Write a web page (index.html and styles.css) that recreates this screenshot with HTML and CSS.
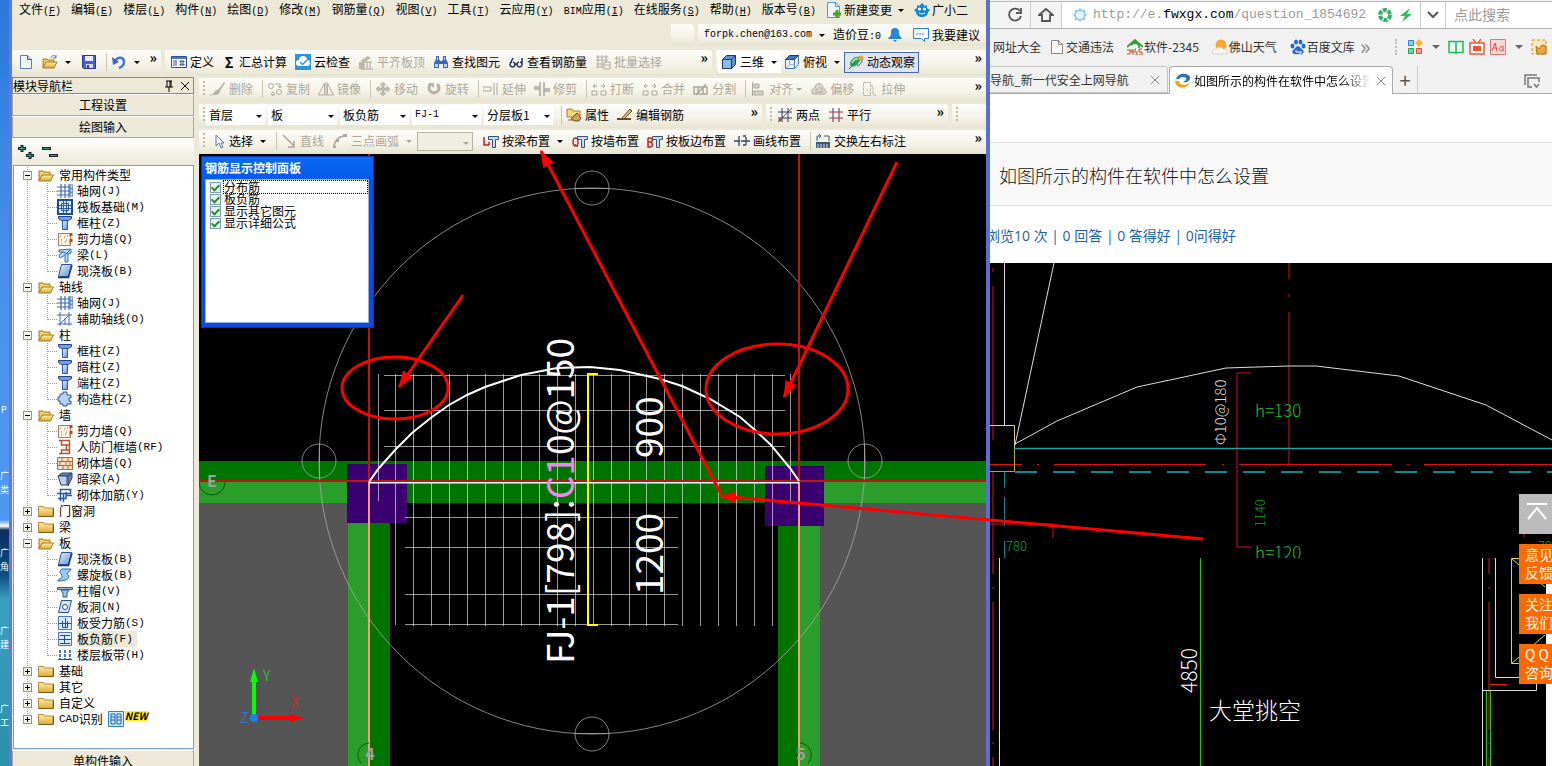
FILE: index.html
```html
<!DOCTYPE html>
<html lang="zh-CN">
<head>
    <meta charset="UTF-8">
    <meta name="viewport" content="width=device-width, initial-scale=1.0">
    <title>如图所示的构件在软件中怎么设置</title>
    <link rel="stylesheet" href="styles.css">
</head>
<body>
    <!-- icon set -->
    <svg class="sprite" aria-hidden="true">
        <defs>
            <linearGradient id="blue" x1="0" y1="0" x2="1" y2="1"><stop offset="0" stop-color="#e8f2ff"/><stop offset="1" stop-color="#5f94dc"/></linearGradient>
            <linearGradient id="gold" x1="0" y1="0" x2="0" y2="1"><stop offset="0" stop-color="#fff0a8"/><stop offset="1" stop-color="#dfa43a"/></linearGradient>
            <symbol id="new" viewBox="0 0 16 16"><path d="M2.500 1.500h7l4 4v9h-11z" fill="#f2f8ff" stroke="#5f7fae"/><path d="M9.500 1.500v4h4" fill="#bcd4f0" stroke="#34548c"/></symbol>
            <symbol id="open" viewBox="0 0 16 16"><path d="M1 14V4h4l1 1h6v3" fill="#f2cf62" stroke="#a67b1e"/><path d="M1 14l3-6h11.500l-3 6z" fill="url(#gold)" stroke="#a67b1e"/></symbol>
            <symbol id="openup" viewBox="0 0 16 16"><path d="M1 14V5h4l1 1h6v2" fill="#f2cf62" stroke="#a67b1e"/><path d="M1 14l3-6h11l-3 6z" fill="url(#gold)" stroke="#a67b1e"/><path d="M9 4c1-3 3-3 5-1m0-2v3h-3" fill="none" stroke="#4c7cc0"/></symbol>
            <symbol id="folder" viewBox="0 0 16 16"><path d="M.500 13.500v-10h5l1 1.500h8.500v8.500z" fill="url(#gold)" stroke="#b98c2c"/><path d="M1 13.500h14.500V5" fill="none" stroke="#7c5a14"/></symbol>
            <symbol id="save" viewBox="0 0 16 16"><path d="M1.500 1.500h13v13h-12l-1-1z" fill="#4a5fd0" stroke="#2b3590"/><path d="M4 2h8v5H4z" fill="#e8eefc"/><path d="M5 10h7v4H5z" fill="#d0d8f0"/><path d="M6 11h2v3H6z" fill="#2b3590"/></symbol>
            <symbol id="undo" viewBox="0 0 16 16"><path d="M4 7c3-5 9-4 9 1 0 3-2 5-5 6" fill="none" stroke="#4a78d8" stroke-width="2.500"/><path d="M1 3l1 8 6-3z" fill="#3a68c8"/></symbol>
            <symbol id="define" viewBox="0 0 16 16"><path d="M.500 2.500h15v11h-15z" fill="#fff" stroke="#2c4f98"/><path d="M1 3h14v2H1z" fill="#4d79c8"/><path d="M2 7h4m-4 2h4m-4 2h4M9 7h4v1H9zm0 3h4v1H9z" stroke="#2c4f98" fill="none"/></symbol>
            <symbol id="cloud" viewBox="0 0 16 16"><path d="M0 0h16v16H0z" fill="#2f93d8"/><path d="M4 12a3 3 0 0 1 0-6 4 4 0 0 1 8 0 3 3 0 0 1 0 6z" fill="#fff"/><path d="M5 8l2.500 2.500L12 6" fill="none" stroke="#2f93d8" stroke-width="1.500"/></symbol>
            <symbol id="level" viewBox="0 0 16 16"><path d="M2 7l8-5 3 2-6 4zM1 8h5v7H1z" fill="#bdb9aa"/><path d="M6 14V9m3 5V8m3 6V8M3 15h12M4 8h10" stroke="#a5a193" fill="none"/></symbol>
            <symbol id="find" viewBox="0 0 16 16"><path d="M3 2h3v3l1 2h2l1-2V2h3v3l2 4v5h-5v-4H6v4H1V9l2-4z" fill="#3c69b4"/><path d="M2 10h3v3H2zm9 0h3v3h-3zM4 3h1v3H4zm7 0h1v3h-1z" fill="#b6d1f5"/></symbol>
            <symbol id="glasses" viewBox="0 0 16 16"><path d="M4 8a2.500 2.500 0 1 0 1 0M11 8a2.500 2.500 0 1 0 1 0M6 10h3M2 10L5 4M14 10V4" fill="none" stroke="#203058" stroke-width="1.500"/></symbol>
            <symbol id="batch" viewBox="0 0 16 16"><path d="M1 3h12M1 6h12M1 10h8M3 1v13M7 1v13M11 1v8M1 13h7M9 8h6v7H9zM9 11h6" fill="none" stroke="#b0ac9f"/></symbol>
            <symbol id="cube" viewBox="0 0 16 16"><path d="M1.500 5.500l4-4h9v9l-4 4h-9z" fill="#5d93cf" stroke="#1f3c68"/><path d="M1.500 5.500h9v9h-9z" fill="#8dbbe8" stroke="#1f3c68"/><path d="M10.500 5.500l4-4" stroke="#1f3c68"/></symbol>
            <symbol id="cubetop" viewBox="0 0 16 16"><path d="M1.500 5.500h9v9h-9zM10.500 5.500l4-4v9l-4 4" fill="#e8f2fc" stroke="#4874a8"/><path d="M1.500 5.500l4-4h9l-4 4z" fill="#3d74bd" stroke="#1f3c68"/><path d="M5.500 5.500v5h5M5.500 10.500l-4 4" fill="none" stroke="#9ab8dc"/></symbol>
            <symbol id="orbit" viewBox="0 0 16 16"><path d="M2 10c0-4 5-8 9-7 3 2-1 8-4 9-2 1-5 1-5-2z" fill="#2d9c50"/><path d="M4 9c1-3 4-5 6-4" stroke="#9ce4a8" stroke-width="2" fill="none"/><circle cx="13" cy="4" r="2.500" fill="#f0a020"/><path d="M1 15l6-6" stroke="#58503a"/><path d="M9 12c3-1 5-4 5-6" stroke="#2a60a8" fill="none"/></symbol>
            <symbol id="brush" viewBox="0 0 16 16"><path d="M14 1L8 9l2 1 5-8zM8 9c-3-1-3 3-6 4 3 2 8 1 8-3z" fill="#b5b1a4"/><path d="M0 14h2m1 0h1" stroke="#b5b1a4"/></symbol>
            <symbol id="copy" viewBox="0 0 16 16"><g fill="none" stroke="#b0ac9f"><circle cx="4" cy="5" r="2.500"/><circle cx="12" cy="11" r="2.500"/><circle cx="6" cy="13" r="1.500"/><path d="M8 3h5v4m-2-2l2 2 2-2"/></g></symbol>
            <symbol id="mirror" viewBox="0 0 16 16"><path d="M6.500 2v12h-6zM9.500 2v12h6zM8 1v14" fill="none" stroke="#b0ac9f"/></symbol>
            <symbol id="move" viewBox="0 0 16 16"><path d="M8 1l3 3H9v3h3V5l3 3-3 3V9H9v3h2l-3 3-3-3h2V9H4v2L1 8l3-3v2h3V4H5z" fill="#c0bcae" stroke="#a8a497" stroke-width=".5"/></symbol>
            <symbol id="rotate" viewBox="0 0 16 16"><path d="M5 3a5 5 0 1 0 6 0" fill="none" stroke="#b5b1a4" stroke-width="3"/><path d="M2 2h6v5z" fill="#b5b1a4"/></symbol>
            <symbol id="extend" viewBox="0 0 16 16"><path d="M0 6h8v4H0zM11 2v12M14 2v12" fill="none" stroke="#aba79a"/></symbol>
            <symbol id="trim" viewBox="0 0 16 16"><path d="M6 1v14M10 1v14M0 8h6m4 0h6M0 6h5m6 4h5" fill="none" stroke="#aba79a" stroke-width="1.500"/></symbol>
            <symbol id="break" viewBox="0 0 16 16"><path d="M1 10h5v4H1zM10 10h5v4h-5zM2 5h4M10 5h4M4 3L2 5l2 2m8-4l2 2-2 2" fill="none" stroke="#aba79a"/></symbol>
            <symbol id="split" viewBox="0 0 16 16"><path d="M1 6h13v7H1zM3 14L13 3m-8 3v7m5-7v7" fill="none" stroke="#aba79a" stroke-width="1.500"/></symbol>
            <symbol id="align" viewBox="0 0 16 16"><path d="M2.500 1v14M4 3h5v4H4zM4 10h9v4H4z" fill="#d5d1c4" stroke="#aba79a"/></symbol>
            <symbol id="offset" viewBox="0 0 16 16"><path d="M2 13c-3-3 0-6 2-6 0-6 8-6 8 0 3 1 4 4 2 6zM5 11c-1-2 1-3 2-3 0-2 3-2 3 0 1 0 2 1 1 3z" fill="#dcd8cc" stroke="#aba79a"/></symbol>
            <symbol id="stretch" viewBox="0 0 16 16"><path d="M1.500 1.500h7v13h-7zM8 5h3v9h4M4 8l3 3" fill="none" stroke="#b5b1a4" stroke-dasharray="3 1"/></symbol>
            <symbol id="props" viewBox="0 0 16 16"><path d="M1 2h5l1 2h7v6H1z" fill="#f3d774" stroke="#a98230"/><path d="M5 12l6-6 4 5-2 3H9z" fill="#cfa268" stroke="#6c4a20"/><path d="M2 13h5" stroke="#8c6c30"/></symbol>
            <symbol id="editbar" viewBox="0 0 16 16"><path d="M0 12h14" stroke="#704030" stroke-width="2"/><path d="M5 11l8-9 2 2-8 8z" fill="#d8c070" stroke="#604820"/></symbol>
            <symbol id="twopt" viewBox="0 0 16 16"><path d="M5 1v14M11 1v14M1 5h14M1 11h14" stroke="#303860"/><path d="M1 15L15 1" stroke="#b03838"/><circle cx="3" cy="13" r="1.500" fill="#b03838"/></symbol>
            <symbol id="parallel" viewBox="0 0 16 16"><path d="M5 1v14M11 1v14" stroke="#303870"/><path d="M1 5h14M1 11h14" stroke="#c02848"/></symbol>
            <symbol id="cursor" viewBox="0 0 16 16"><path d="M6 2v11l3-3 2 5 2-1-2-4h3z" fill="#f4f8ff" stroke="#5878a8"/></symbol>
            <symbol id="line" viewBox="0 0 16 16"><path d="M2 2l11 11m0-5v6H7" fill="none" stroke="#aba79a" stroke-width="1.500"/></symbol>
            <symbol id="arc" viewBox="0 0 16 16"><path d="M2 14C2 8 7 3 13 3" fill="none" stroke="#aba79a" stroke-width="1.500"/><path d="M1 13h3v2H1zM4 6h3v3H4zM11 1h4v3h-4z" fill="#aba79a"/></symbol>
            <symbol id="tee" viewBox="0 0 16 16"><path d="M5.500 3.500h10v3h-3v8h-3v-8h-4z" fill="#c6dcf4" stroke="#33547c"/></symbol>
            <symbol id="beamset" viewBox="0 0 16 16"><use href="#tee"/><path d="M1 4v8h5M6 9v3" fill="none" stroke="#c02020" stroke-width="1.500"/></symbol>
            <symbol id="wallset" viewBox="0 0 16 16"><use href="#tee"/><ellipse cx="3.500" cy="9" rx="2.500" ry="4" fill="none" stroke="#c02020" stroke-width="1.500"/><path d="M3 11l3 3" stroke="#c02020"/></symbol>
            <symbol id="edgeset" viewBox="0 0 16 16"><use href="#tee"/><path d="M1 5v9h2.500c3 0 2-5-.5-5H1m0-4h2c3 0 3 4 0 4" fill="none" stroke="#c02020" stroke-width="1.500"/></symbol>
            <symbol id="lineset" viewBox="0 0 16 16"><path d="M0 8h4m3 0h9M5 3v10M12 4v8M3 8h3M9 3h3m-3 9h3" fill="none" stroke="#304868" stroke-width="1.300"/></symbol>
            <symbol id="swap" viewBox="0 0 16 16"><path d="M2 8V3h4m3 0h5v5M4 1l2 2-2 2" fill="none" stroke="#405878"/><path d="M1 9h14v6H1z" fill="#405878"/><path d="M3 11v4m3-4v4m3-4v4m3-4v4" stroke="#d5e0ee"/></symbol>
            <symbol id="docadd" viewBox="0 0 16 16"><path d="M1.500.500h8l4 4v11h-12z" fill="#eaf5fd" stroke="#4a9cd0"/><path d="M9.500.500v4h4" fill="none" stroke="#4a9cd0"/><path d="M11 8v8M7 12h8" stroke="#48a020" stroke-width="3"/></symbol>
            <symbol id="mascot" viewBox="0 0 16 16"><path d="M3 3l2 1 3-3 3 3 2-1v3l3 2-2 2c0 3-3 5-6 5s-6-2-6-5L0 8l3-2z" fill="#1787d0"/><circle cx="5.500" cy="7" r="1.500" fill="#fff"/><circle cx="10.500" cy="7" r="1.500" fill="#fff"/><path d="M5 11q3 2 6 0" fill="none" stroke="#fff"/></symbol>
            <symbol id="bell" viewBox="0 0 16 16"><path d="M8 1c4 0 4 3 4 6 0 2 3 4 3 5H1c0-1 3-3 3-5 0-3 0-6 4-6zM6 13h4l-2 2z" fill="#2386d8"/></symbol>
            <symbol id="chat" viewBox="0 0 16 16"><path d="M.500 1.500h15v10h-4v3l-3-3h-8z" fill="#f4faff" stroke="#3080c8"/><path d="M3 7h2m1 0h2m1 0h2" stroke="#3080c8"/></symbol>
            <symbol id="grid" viewBox="0 0 16 16"><path d="M4 1v14M8 1v14M12 1v14M0 4h14M0 8h14M0 12h14" stroke="#3d6cb8" fill="none" stroke-width="1.200"/><path d="M13 2h3v3h-3zm0 4h3v3h-3zm0 4h3v3h-3z" fill="#fff" stroke="#3d6cb8"/></symbol>
            <symbol id="raft" viewBox="0 0 16 16"><path d="M1 1h14v14H1z" fill="#dceaff" stroke="#1c4c9c" stroke-width="2"/><path d="M4.500 4.500h7v7h-7zM6.500 2v12M9.500 2v12M2 6.500h12M2 9.500h12" fill="none" stroke="#2c5cac"/></symbol>
            <symbol id="column" viewBox="0 0 16 16"><path d="M1.500 1.500h13v2l-3 2h-7l-3-2z" fill="#6ea0e8" stroke="#203f8c"/><path d="M5.500 5.500h5v9h-5z" fill="url(#blue)" stroke="#3157a4"/></symbol>
            <symbol id="shear" viewBox="0 0 16 16"><path d="M1.500 2.500h12v12h-12z" fill="#fff3e4" stroke="#b07850"/><path d="M14 2v3m0 3v3" stroke="#b04c20" stroke-width="3"/><path d="M3 5h1m3 1h1m-4 3h1m4 0h1m-6 3h1m3-1h1m3 1h1M10 5h1" stroke="#806050"/></symbol>
            <symbol id="beam" viewBox="0 0 16 16"><path d="M2 3l12-1v4l-3 1v8H8V8L3 11l-1-3 4-3H2z" fill="#b5dcf6" stroke="#3174ac"/><path d="M6 5l5 2m-3 1l5-5" stroke="#3174ac"/></symbol>
            <symbol id="slab" viewBox="0 0 16 16"><path d="M4.500 1.500h10l-3 12h-10z" fill="url(#blue)" stroke="#24509c"/><path d="M1 14.500h10.500L15 2" fill="none" stroke="#173878" stroke-width="1.500"/></symbol>
            <symbol id="aux" viewBox="0 0 16 16"><path d="M3 1v14M12 1v14M0 4h15M0 13h15M3 13l9-9M8 7v7" stroke="#3d6cb8" fill="none"/></symbol>
            <symbol id="gear" viewBox="0 0 16 16"><path d="M6 1h4v3h4v3h-2v3h2v3h-4v2H6v-2H3v-3H1V6h2V3h3z" fill="#b5d2f4" stroke="#2c5494"/></symbol>
            <symbol id="doorwall" viewBox="0 0 16 16"><path d="M2 1.500h11M2 14.500h11M4.500 2v4h5v5h-5v3M12.500 2v12M9 6h3m-3 5h3" fill="#fff3e4" stroke="#b05428" stroke-width="1.500"/></symbol>
            <symbol id="brick" viewBox="0 0 16 16"><path d="M.500 2.500h15v12H.500zM0 6.500h16M0 10.500h16M5 2v4m6-4v4M3 7v4m6-4v4m4-4v4M6 11v3m5-3v3" fill="#fbe0c8" stroke="#b86838"/></symbol>
            <symbol id="hidbeam" viewBox="0 0 16 16"><path d="M1 5l4-3h10l-4 3zM11 5l4-3v5l-4 8z" fill="#6885b4" stroke="#28406c"/><path d="M1 5h9v9H4z" fill="#bed0ec" stroke="#28406c"/></symbol>
            <symbol id="tie" viewBox="0 0 16 16"><path d="M3.500 14V2.500h11M1 11.500h8V5M9 8.500h6M6.500 15V6.500h7V2M0 6.500h6" fill="none" stroke="#205cac" stroke-width="1.500"/></symbol>
            <symbol id="spiral" viewBox="0 0 16 16"><path d="M5 2h9c0 3-6 3-3 6 3 3-2 6-10 6 0-3 5-2 4-5C4 6 1 5 5 2z" fill="#95cdf4" stroke="#25649c"/></symbol>
            <symbol id="cap" viewBox="0 0 16 16"><path d="M.500 4.500h15v2H.500z" fill="#aab4c0" stroke="#485868"/><path d="M4 7h8l-2 3v4H6v-4z" fill="#9cc2f0" stroke="#285898"/></symbol>
            <symbol id="hole" viewBox="0 0 16 16"><path d="M4.500 1.500h10l-3 12h-10z" fill="#cfe2fb" stroke="#24509c"/><circle cx="8" cy="8" r="2.500" fill="#fff" stroke="#24509c"/></symbol>
            <symbol id="mainbar" viewBox="0 0 16 16"><path d="M1.500 1.500h13v13h-13z" fill="#d9e9ff" stroke="#4c78b8"/><path d="M2 8.500h12M8.500 3v10M5.500 6v6.500h5V6" fill="none" stroke="#204c94"/></symbol>
            <symbol id="negbar" viewBox="0 0 16 16"><path d="M1.500 1.500h13v13h-13z" fill="#d9e9ff" stroke="#4c78b8"/><path d="M2 8.500h12M3 4.500h10M3 12.500h10M7.500 4v8" fill="none" stroke="#204c94"/></symbol>
            <symbol id="strip" viewBox="0 0 16 16"><path d="M1 12.500h14" stroke="#204c94"/><path d="M3 3v9m5-9v9m5-9v9" stroke="#4c78b8" stroke-width="2" stroke-dasharray="3 1"/></symbol>
            <symbol id="cadid" viewBox="0 0 16 16"><path d="M.500.500h15v15H.500z" fill="#cfe9fb" stroke="#2c84c4"/><path d="M3 3h4v10H3zm6 0h4v10H9zM3 6h4m2 0h4M3 9h4m2 0h4" fill="none" stroke="#1c64a4"/></symbol>
            <symbol id="site" viewBox="0 0 16 16"><path d="M8 1l2 2h3v3l2 2-2 2v3h-3l-2 2-2-2H3v-3L1 8l2-2V3h3z" fill="#8cc8f4"/><circle cx="8" cy="8" r="4" fill="#e4f4ff"/></symbol>
            <symbol id="speed" viewBox="0 0 16 16"><circle cx="8" cy="8" r="5" fill="none" stroke="#30b068" stroke-width="4" stroke-dasharray="4 1.200"/></symbol>
            <symbol id="bolt" viewBox="0 0 16 16"><path d="M12 1L2 9h5l-3 6L14 7H9z" fill="#28c060"/></symbol>
            <symbol id="page" viewBox="0 0 16 16"><path d="M2.500 1.500h7l4 4v9h-11zM9.500 1.500v4h4" fill="#fff" stroke="#888"/></symbol>
            <symbol id="house" viewBox="0 0 16 16"><path d="M0 8l8-7 8 7M4 6l4-3 4 3v3" fill="none" stroke="#38a038" stroke-width="1.800"/><path d="M0 11h3v4H0m4-5v3h3m-1-3v6m3-6H8v3h2v3H8m7-6h-3v3h3v3h-3" fill="none" stroke="#d04818"/></symbol>
            <symbol id="weather" viewBox="0 0 16 16"><circle cx="9" cy="6" r="5.500" fill="#f8a830"/><path d="M1 15c-2-3 1-5 3-5 2-3 6-2 7 0 4-1 5 3 4 5z" fill="#f4f4f4" stroke="#bbb" stroke-width=".5"/></symbol>
            <symbol id="paw" viewBox="0 0 16 16"><g fill="#2668d8"><ellipse cx="2.500" cy="7" rx="2" ry="2.500"/><ellipse cx="6" cy="3" rx="2" ry="2.500"/><ellipse cx="10.500" cy="3" rx="2" ry="2.500"/><ellipse cx="13.500" cy="7" rx="2" ry="2.500"/><path d="M8 7c2 0 3 3 5 4 2 3-1 5-5 4-4 1-7-1-5-4 2-1 3-4 5-4z"/></g><path d="M5 12h2v2m2-2v2h2v-2" fill="none" stroke="#fff"/></symbol>
            <symbol id="apps" viewBox="0 0 16 16"><path d="M1.500 1.500h5v5h-5z" fill="#8cc8f8" stroke="#2484d8"/><path d="M1.500 9.500h5v5h-5z" fill="#70d890" stroke="#20a850"/><path d="M9.500 9.500h5v5h-5z" fill="#f8a090" stroke="#e05038"/><path d="M12 0l4 4-4 4-4-4z" fill="#f8b828"/></symbol>
            <symbol id="book" viewBox="0 0 16 16"><path d="M1 2.500h6l1 1 1-1h6v11H9l-1 1-1-1H1zM8 3v11" fill="#e8fbee" stroke="#20b858" stroke-width="1.500"/></symbol>
            <symbol id="tv" viewBox="0 0 16 16"><path d="M1 4h14v11H1zM4 0l3 4m5-4L9 4" fill="#fff" stroke="#e85838" stroke-width="1.500"/><path d="M4 7h8v5H4z" fill="#e85838"/></symbol>
            <symbol id="aa" viewBox="0 0 16 16"><path d="M.500.500h15v15H.500z" fill="#fcd8d4" stroke="#e07870"/><path d="M2 12l3-8 2 8M3 9h4m6-2v5m0-4c-4-2-5 4-2 4 1 0 2-1 2-2" fill="none" stroke="#d85048"/></symbol>
            <symbol id="snap" viewBox="0 0 16 16"><path d="M1 1h14v14H1z" fill="#fce8c0" stroke="#d89020" stroke-dasharray="3 2"/><path d="M5 7l3 3 3-4 4 1v8H6z" fill="#e8a840" stroke="#b87010"/></symbol>
            <symbol id="glodon" viewBox="0 0 16 16"><path d="M1 6c2-6 11-7 14-2 1 3-3 6-7 5 2-1 4-2 3-4-2-2-6-1-7 1z" fill="#2374b8"/><path d="M0 8h4c0 4 6 5 11 2-3 6-14 7-15-2z" fill="#f0a020"/></symbol>
            <symbol id="reload" viewBox="0 0 16 16"><path d="M13 4a6 6 0 1 0 1 5" fill="none" stroke="#555" stroke-width="1.800"/><path d="M14 1v5H9" fill="none" stroke="#555" stroke-width="1.800"/></symbol>
            <symbol id="home" viewBox="0 0 16 16"><path d="M1 8l7-6 7 6h-3v6H4V8z" fill="none" stroke="#555" stroke-width="1.800"/></symbol>
            <symbol id="down" viewBox="0 0 16 16"><path d="M3 5l5 5 5-5" fill="none" stroke="#555" stroke-width="2"/></symbol>
            <symbol id="close" viewBox="0 0 16 16"><path d="M4 4l8 8m0-8l-8 8" fill="none" stroke="currentColor"/></symbol>
            <symbol id="restore" viewBox="0 0 16 16"><path d="M1 12V2h12M12 5H4v9h4m7-5V5h-4M10 11l2.500 3 2.500-3" fill="none" stroke="#777" stroke-width="1.500"/></symbol>
            <symbol id="pin" viewBox="0 0 16 16"><path d="M5 3h6M6 3v6m3-6v6m1-6v6M4 9h8M8 9v5" fill="none" stroke="#000"/></symbol>
            <symbol id="expand" viewBox="0 0 16 16"><path d="M4 1v7M0 4.500h8M12 8v7M8 11.500h8" stroke="#123" stroke-width="3"/><path d="M4 2v5M1 4.500h6M12 9v5M9 11.500h6" stroke="#2ba870"/></symbol>
            <symbol id="collapse" viewBox="0 0 16 16"><path d="M0 4.500h9M7 11.500h9" stroke="#123" stroke-width="3"/><path d="M1 4.500h7M8 11.500h7" stroke="#2ba870"/></symbol>
            <symbol id="totop" viewBox="0 0 24 24"><path d="M2 3h20M3 18l9-11 9 11" fill="none" stroke="#fff" stroke-width="2"/></symbol>
        </defs>
    </svg>

    <div class="screen">
        <svg class="desktop" aria-hidden="true">
            <text x="1" y="413">P</text>
            <text x="0" y="479">广</text><text x="0" y="493">类</text>
            <text x="0" y="556">广</text><text x="0" y="570">角</text>
            <text x="0" y="634">广</text><text x="0" y="648">建</text>
            <text x="0" y="712">广</text><text x="0" y="726">工</text>
        </svg>

        <div class="cad">
            <nav class="menu">
                <button>文件<span class="en">(<u>F</u>)</span></button>
                <button>编辑<span class="en">(<u>E</u>)</span></button>
                <button>楼层<span class="en">(<u>L</u>)</span></button>
                <button>构件<span class="en">(<u>N</u>)</span></button>
                <button>绘图<span class="en">(<u>D</u>)</span></button>
                <button>修改<span class="en">(<u>M</u>)</span></button>
                <button>钢筋量<span class="en">(<u>Q</u>)</span></button>
                <button>视图<span class="en">(<u>V</u>)</span></button>
                <button>工具<span class="en">(<u>T</u>)</span></button>
                <button>云应用<span class="en">(<u>Y</u>)</span></button>
                <button><span class="en">BIM</span>应用<span class="en">(<u>I</u>)</span></button>
                <button>在线服务<span class="en">(<u>S</u>)</span></button>
                <button>帮助<span class="en">(<u>H</u>)</span></button>
                <button>版本号<span class="en">(<u>B</u>)</span></button>
                <button class="tool"><svg><use href="#docadd"/></svg>新建变更<i class="caret"></i></button>
                <button class="tool"><svg><use href="#mascot"/></svg>广小二</button>
            </nav>

            <div class="row account">
                <div class="bar blank"></div>
                <div class="bar user">
                    <button class="tool"><span class="en">forpk.chen@163.com</span><i class="caret"></i></button>
                    <span>造价豆<span class="en">:0</span></span>
                    <button class="tool" aria-label="消息"><svg><use href="#bell"/></svg></button>
                    <button class="tool"><svg><use href="#chat"/></svg>我要建议</button>
                </div>
            </div>

            <div class="row main-tools">
                <div class="bar file-tools">
                    <button class="tool" aria-label="新建"><svg><use href="#new"/></svg></button>
                    <button class="tool" aria-label="打开"><svg><use href="#openup"/></svg><i class="caret"></i></button>
                    <button class="tool" aria-label="保存"><svg><use href="#save"/></svg></button>
                    <i class="sep"></i>
                    <button class="tool" aria-label="撤销"><svg><use href="#undo"/></svg><i class="caret"></i></button>
                    <button class="more">»</button>
                </div>
                <div class="bar wide">
                    <button class="tool"><svg><use href="#define"/></svg>定义</button>
                    <button class="tool"><b class="sigma">Σ</b>汇总计算</button>
                    <button class="tool"><svg><use href="#cloud"/></svg>云检查</button>
                    <button class="tool" disabled><svg><use href="#level"/></svg>平齐板顶</button>
                    <button class="tool"><svg><use href="#find"/></svg>查找图元</button>
                    <button class="tool"><svg><use href="#glasses"/></svg>查看钢筋量</button>
                    <button class="tool" disabled><svg><use href="#batch"/></svg>批量选择</button>
                    <button class="more">»</button>
                </div>
                <div class="bar view-tools">
                    <button class="tool white"><svg><use href="#cube"/></svg>三维<i class="caret"></i></button>
                    <button class="tool"><svg><use href="#cubetop"/></svg>俯视<i class="caret"></i></button>
                    <button class="tool pressed"><svg><use href="#orbit"/></svg>动态观察</button>
                    <button class="more">»</button>
                </div>
            </div>

            <div class="work">
                <aside class="side">
                    <header class="side-title"><span>模块导航栏</span><svg><use href="#pin"/></svg><svg><use href="#close"/></svg></header>
                    <button class="side-tab">工程设置</button>
                    <button class="side-tab">绘图输入</button>
                    <div class="side-tools">
                        <button aria-label="展开"><svg><use href="#expand"/></svg></button>
                        <button aria-label="折叠"><svg><use href="#collapse"/></svg></button>
                    </div>
                    <ul class="tree">
                        <li><div class="node"><button class="toggle" aria-label="折叠"></button><svg><use href="#open"/></svg>常用构件类型</div>
                            <ul>
                                <li><svg><use href="#grid"/></svg>轴网<span class="en">(J)</span></li>
                                <li><svg><use href="#raft"/></svg>筏板基础<span class="en">(M)</span></li>
                                <li><svg><use href="#column"/></svg>框柱<span class="en">(Z)</span></li>
                                <li><svg><use href="#shear"/></svg>剪力墙<span class="en">(Q)</span></li>
                                <li><svg><use href="#beam"/></svg>梁<span class="en">(L)</span></li>
                                <li><svg><use href="#slab"/></svg>现浇板<span class="en">(B)</span></li>
                            </ul>
                        </li>
                        <li><div class="node"><button class="toggle" aria-label="折叠"></button><svg><use href="#open"/></svg>轴线</div>
                            <ul>
                                <li><svg><use href="#grid"/></svg>轴网<span class="en">(J)</span></li>
                                <li><svg><use href="#aux"/></svg>辅助轴线<span class="en">(O)</span></li>
                            </ul>
                        </li>
                        <li><div class="node"><button class="toggle" aria-label="折叠"></button><svg><use href="#open"/></svg>柱</div>
                            <ul>
                                <li><svg><use href="#column"/></svg>框柱<span class="en">(Z)</span></li>
                                <li><svg><use href="#column"/></svg>暗柱<span class="en">(Z)</span></li>
                                <li><svg><use href="#column"/></svg>端柱<span class="en">(Z)</span></li>
                                <li><svg><use href="#gear"/></svg>构造柱<span class="en">(Z)</span></li>
                            </ul>
                        </li>
                        <li><div class="node"><button class="toggle" aria-label="折叠"></button><svg><use href="#open"/></svg>墙</div>
                            <ul>
                                <li><svg><use href="#shear"/></svg>剪力墙<span class="en">(Q)</span></li>
                                <li><svg><use href="#doorwall"/></svg>人防门框墙<span class="en">(RF)</span></li>
                                <li><svg><use href="#brick"/></svg>砌体墙<span class="en">(Q)</span></li>
                                <li><svg><use href="#hidbeam"/></svg>暗梁<span class="en">(A)</span></li>
                                <li><svg><use href="#tie"/></svg>砌体加筋<span class="en">(Y)</span></li>
                            </ul>
                        </li>
                        <li><div class="node"><button class="toggle plus" aria-label="展开"></button><svg><use href="#folder"/></svg>门窗洞</div></li>
                        <li><div class="node"><button class="toggle plus" aria-label="展开"></button><svg><use href="#folder"/></svg>梁</div></li>
                        <li><div class="node"><button class="toggle" aria-label="折叠"></button><svg><use href="#open"/></svg>板</div>
                            <ul>
                                <li><svg><use href="#slab"/></svg>现浇板<span class="en">(B)</span></li>
                                <li><svg><use href="#spiral"/></svg>螺旋板<span class="en">(B)</span></li>
                                <li><svg><use href="#cap"/></svg>柱帽<span class="en">(V)</span></li>
                                <li><svg><use href="#hole"/></svg>板洞<span class="en">(N)</span></li>
                                <li><svg><use href="#mainbar"/></svg>板受力筋<span class="en">(S)</span></li>
                                <li><svg><use href="#negbar"/></svg><span class="current">板负筋<span class="en">(F)</span></span></li>
                                <li><svg><use href="#strip"/></svg>楼层板带<span class="en">(H)</span></li>
                            </ul>
                        </li>
                        <li><div class="node"><button class="toggle plus" aria-label="展开"></button><svg><use href="#folder"/></svg>基础</div></li>
                        <li><div class="node"><button class="toggle plus" aria-label="展开"></button><svg><use href="#folder"/></svg>其它</div></li>
                        <li><div class="node"><button class="toggle plus" aria-label="展开"></button><svg><use href="#folder"/></svg>自定义</div></li>
                        <li><div class="node"><button class="toggle plus" aria-label="展开"></button><svg><use href="#folder"/></svg><span class="en">CAD</span>识别<svg class="cadid"><use href="#cadid"/></svg><b class="new">NEW</b></div></li>
                    </ul>
                    <button class="side-tab last">单构件输入</button>
                </aside>

                <main class="stage">
                    <div class="bar grip">
                        <button class="tool" disabled><svg><use href="#brush"/></svg>删除</button>
                        <i class="sep"></i>
                        <button class="tool" disabled><svg><use href="#copy"/></svg>复制</button>
                        <button class="tool" disabled><svg><use href="#mirror"/></svg>镜像</button>
                        <i class="sep"></i>
                        <button class="tool" disabled><svg><use href="#move"/></svg>移动</button>
                        <button class="tool" disabled><svg><use href="#rotate"/></svg>旋转</button>
                        <i class="sep"></i>
                        <button class="tool" disabled><svg><use href="#extend"/></svg>延伸</button>
                        <button class="tool" disabled><svg><use href="#trim"/></svg>修剪</button>
                        <i class="sep"></i>
                        <button class="tool" disabled><svg><use href="#break"/></svg>打断</button>
                        <button class="tool" disabled><svg><use href="#break"/></svg>合并</button>
                        <button class="tool" disabled><svg><use href="#split"/></svg>分割</button>
                        <i class="sep"></i>
                        <button class="tool tight" disabled><svg><use href="#align"/></svg>对齐<i class="caret"></i></button>
                        <button class="tool" disabled><svg><use href="#offset"/></svg>偏移</button>
                        <button class="tool" disabled><svg><use href="#stretch"/></svg>拉伸</button>
                        <button class="more">»</button>
                    </div>
                    <div class="row">
                        <div class="bar grip wide">
                            <span class="combo floor"><select aria-label="楼层"><option>首层</option></select></span>
                            <span class="combo"><select aria-label="构件类别"><option>板</option></select></span>
                            <span class="combo"><select aria-label="构件类型"><option>板负筋</option></select></span>
                            <span class="combo"><select class="en" aria-label="构件"><option>FJ-1</option></select></span>
                            <span class="combo"><select aria-label="分层"><option>分层板1</option></select></span>
                            <i class="sep"></i>
                            <button class="tool"><svg><use href="#props"/></svg>属性</button>
                            <button class="tool"><svg><use href="#editbar"/></svg>编辑钢筋</button>
                            <button class="more">»</button>
                        </div>
                        <div class="bar grip axis-tools">
                            <button class="tool"><svg><use href="#twopt"/></svg>两点</button>
                            <button class="tool"><svg><use href="#parallel"/></svg>平行</button>
                            <button class="more">»</button>
                        </div>
                        <div class="bar grip stub"></div>
                    </div>
                    <div class="bar grip draw-tools">
                        <button class="tool"><svg><use href="#cursor"/></svg>选择<i class="caret"></i></button>
                        <i class="sep"></i>
                        <button class="tool" disabled><svg><use href="#line"/></svg>直线</button>
                        <button class="tool" disabled><svg><use href="#arc"/></svg>三点画弧<i class="caret"></i></button>
                        <span class="combo empty"><select aria-label="绘制方式" disabled><option></option></select></span>
                        <i class="sep faint"></i>
                        <button class="tool"><svg><use href="#beamset"/></svg>按梁布置<i class="caret"></i></button>
                        <button class="tool"><svg><use href="#wallset"/></svg>按墙布置</button>
                        <button class="tool"><svg><use href="#edgeset"/></svg>按板边布置</button>
                        <button class="tool"><svg><use href="#lineset"/></svg>画线布置</button>
                        <i class="sep"></i>
                        <button class="tool"><svg><use href="#swap"/></svg>交换左右标注</button>
                        <button class="more">»</button>
                    </div>

                    <div class="canvas">
                        <svg class="drawing" viewBox="199 154 787 612" preserveAspectRatio="xMinYMin slice">
                            <!-- beams, slabs and columns -->
                            <path d="M199 503h149v263H199zM820 503h166v263H820z" fill="#555"/>
                            <path d="M199 461h787v42H199zM348 503h42v263h-42zM778 503h42v263h-42z" fill="#007400"/>
                            <path d="M199 482h149v21H199zM820 482h166v21H820zM348 503h21v263h-21zM799 503h21v263h-21z" fill="#2a9d2a"/>
                            <path d="M347 464h60v59h-60zM765 466h59v60h-59z" fill="#3a0070"/>
                            <!-- rebar grid -->
                            <path class="mesh" d="M378.500 374v127M395.500 374v251M413.500 374v252M431.500 374v252M449.500 374v252M467.500 374v252M485.500 374v252M503.500 374v252M521.500 374v252M539.500 374v252M557.500 374v252M575.500 374v252M593.500 374v252M611.500 374v252M629.500 374v252M646.500 374v252M664.500 374v252M682.500 374v252M700.500 374v252M718.500 374v252M736.500 374v252M754.500 374v252M772.500 374v252M790.500 374v127M384 375.500h401M384 410.500h401M384 446.500h401M405 517.500h273M405 547.500h273M405 594.500h273M405 624.500h273"/>
                            <!-- orbit ring -->
                            <g class="ring">
                                <circle cx="592" cy="461" r="273"/>
                                <circle cx="592" cy="188" r="17"/><circle cx="592" cy="734" r="17"/>
                                <circle cx="319" cy="461" r="17"/><circle cx="865" cy="461" r="17"/>
                                <path d="M575 188.500h34M575 733.500h34M319.500 444v34M864.500 444v34"/>
                            </g>
                            <path d="M369 482v284M799 482v284" stroke="#ff9a78" stroke-width="2"/>
                            <path d="M369 482.500h430" stroke="#fff" stroke-width="2"/>
                            <path class="axis" d="M369 154v328M799 154v328M199 481h787"/>
                            <path d="M369 482l10-14 17-19 16-16 20-16 17-12 18-10 18-8 36-12 36-7 33-1 30 3 40 9 22 7 28 13 30 18 15 13 16 15 19 23 9 13" fill="none" stroke="#fff" stroke-width="2"/>
                            <path d="M598 374h-10v251h10" fill="none" stroke="#ff0" stroke-width="2"/>
                            <g class="dims">
                                <text transform="translate(574 664) rotate(-90)">FJ-1[798]:<tspan fill="#ee88ee">C1</tspan>0@150</text>
                                <text transform="translate(663 595) rotate(-90)">1200</text>
                                <text transform="translate(663 458) rotate(-90)">900</text>
                            </g>
                            <g class="axes">
                                <path d="M199 482a13 13 0 0 0 26 0M369 743a12 12 0 0 0-8 20M800 743a12 12 0 0 1 8 20"/>
                                <text x="212" y="487">E</text><text x="370" y="760">4</text><text x="801" y="760">5</text>
                            </g>
                            <!-- ucs -->
                            <path d="M254 716v-34" stroke="#0f0" stroke-width="4"/><path d="M250 682l4-14 4 14z" fill="#0f0"/>
                            <path d="M258 718h32" stroke="#f00" stroke-width="4"/><path d="M290 714l14 4-14 4z" fill="#f00"/>
                            <circle cx="254" cy="718" r="4" fill="#1084ff"/>
                            <g class="ucs"><text x="263" y="681" fill="#30e030">Y</text><text x="291" y="707" fill="#e02020">X</text><text x="240" y="723" fill="#2080f0">Z</text></g>
                        </svg>
                        <section class="dialog">
                            <h2>钢筋显示控制面板</h2>
                            <div class="checks">
                                <label class="focus"><input type="checkbox" checked><span>分布筋</span></label>
                                <label><input type="checkbox" checked><span>板负筋</span></label>
                                <label><input type="checkbox" checked><span>显示其它图元</span></label>
                                <label><input type="checkbox" checked><span>显示详细公式</span></label>
                            </div>
                        </section>
                    </div>
                </main>
            </div>
        </div>

        <div class="browser">
            <div class="address">
                <button aria-label="刷新"><svg><use href="#reload"/></svg></button>
                <button aria-label="主页"><svg><use href="#home"/></svg></button>
                <div class="url">
                    <svg><use href="#site"/></svg>
                    <span class="url-text" contenteditable="true" spellcheck="false">http://e.<b>fwxgx.com</b>/question_1854692</span>
                    <svg class="right"><use href="#speed"/></svg><svg><use href="#bolt"/></svg>
                </div>
                <button class="drop" aria-label="历史"><svg><use href="#down"/></svg></button>
                <input type="text" placeholder="点此搜索" aria-label="搜索">
            </div>
            <div class="bookmarks">
                <a href="#">网址大全</a>
                <a href="#"><svg><use href="#page"/></svg>交通违法</a>
                <a href="#"><svg><use href="#house"/></svg>软件-2345</a>
                <a href="#"><svg><use href="#weather"/></svg>佛山天气</a>
                <a href="#"><svg><use href="#paw"/></svg>百度文库</a>
                <button class="chev">»</button>
                <div class="plugins">
                    <svg><use href="#apps"/></svg><i class="caret"></i><svg><use href="#book"/></svg><svg><use href="#tv"/></svg><svg><use href="#aa"/></svg><i class="caret"></i><svg><use href="#snap"/></svg>
                </div>
            </div>
            <div class="tabs">
                <button class="tab first"><span>导航_新一代安全上网导航</span><svg><use href="#close"/></svg></button>
                <button class="tab active"><svg class="logo"><use href="#glodon"/></svg><span>如图所示的构件在软件中怎么设置</span><svg><use href="#close"/></svg></button>
                <button class="add">+</button>
                <button class="restore" aria-label="恢复"><svg><use href="#restore"/></svg></button>
            </div>
            <article class="page">
                <h1>如图所示的构件在软件中怎么设置</h1>
                <p class="stats">浏览10 次 | 0 回答 | 0 答得好 | 0问得好</p>
                <svg class="plan" viewBox="990 263 562 503" preserveAspectRatio="xMinYMin slice">
                    <path d="M990 263h562v503H990z"/>
                    <path d="M993 286v154M993 268v4M993 472v86M1289 263v16M1289 294v3M1289 312v152M1251 373h-14v174h15M990 524h63v14M1524 520v18" stroke="#d01020"/>
                    <path d="M990 464.500h32M1037 464.500h2M1054 464.500h152M1222 464.500h2M1239 464.500h153M1407 464.500h2M1424 464.500h128" stroke="#e01010"/>
                    <path d="M1004.500 263v162M1054 263l-39 182" stroke="#ddd"/>
                    <path d="M1015 444l42-23 80-34 89-19 63-2h27l83 10 87 29 66 35" stroke="#ddd"/>
                    <path d="M990 425.500h24.500V448" stroke="#d8d0a0"/><path d="M1014.500 448v23.500H990" stroke="#b0a820"/>
                    <path d="M1014 448.500h538" stroke="#20a0a0" stroke-width="1.500"/>
                    <path d="M1015 472h537" stroke="#108890" stroke-width="2" stroke-dasharray="22 16"/>
                    <path d="M1004.500 472v16M1004.500 497v29M1004.500 541v17" stroke="#108890"/>
                    <g class="notes">
                        <text class="m" fill="#ddd" transform="translate(1226 445) rotate(-90)">Φ10@180</text>
                        <text class="l" fill="#20c020" x="1255" y="417">h=130</text>
                        <text class="s" fill="#20a020" transform="translate(1265 527) rotate(-90)">1140</text>
                        <text class="s" fill="#20a020" x="1006" y="551">780</text>
                        <text class="s" fill="#20a020" x="1538" y="551">79</text>
                        <text class="l" fill="#20c020" x="1255" y="559">h=120</text>
                    </g>
                    <path d="M990 558h562v208H990z"/><path d="M1546 558h6v208h-6z" fill="#fff"/>
                    <path d="M993 558v16M993 587v2M993 602v128M993 742v2M993 757v9M1489 558v16M1489 587v2M1489 602v128M1489 742v2M1489 757v9M1489 684.500h18" stroke="#e01818"/>
                    <path d="M999.500 558v208M1482.500 558v208M1482.500 690.500h54v-8M1495.500 558v119.500h50" stroke="#ddd"/>
                    <path d="M1200.500 558v208M1486.500 691v75M1490.500 691v75" stroke="#20c020"/>
                    <path d="M1545 558.500h-33.500v105h34M1512 559l33 28M1512 663l33-28" stroke="#dddd20"/>
                    <text class="len" transform="translate(1197 693) rotate(-90)">4850</text>
                    <text class="hall" x="1209" y="719">大堂挑空</text>
                </svg>
            </article>
            <div class="float">
                <button class="top" aria-label="返回顶部"><svg><use href="#totop"/></svg></button>
                <button>意见<br>反馈</button>
                <button>关注<br>我们</button>
                <button>Q Q<br>咨询</button>
            </div>
        </div>
    </div>

    <!-- red pen marks over both windows -->
    <svg class="marks" aria-hidden="true">
        <defs>
            <marker id="head" markerUnits="userSpaceOnUse" markerWidth="18" markerHeight="12" refX="16" refY="6" orient="auto"><path d="M0 0l17 6-17 6z" fill="#f00"/></marker>
        </defs>
        <ellipse cx="395" cy="388" rx="53" ry="31"/>
        <ellipse cx="777" cy="389" rx="71" ry="45"/>
        <path d="M463 295l-64 92" marker-end="url(#head)"/>
        <path d="M897 162L784 397" marker-end="url(#head)"/>
        <path d="M721 494L541 151" marker-end="url(#head)"/>
        <path d="M1203 539L720 496" marker-end="url(#head)"/>
    </svg>
</body>
</html>
```
FILE: styles.css
```css
* {
    box-sizing: border-box;
}
body {
    margin: 0;
    height: 100vh;
    overflow: hidden;
    position: relative;
    font: 12px/16px "Noto Sans CJK SC", sans-serif;
    color: #000;
}
button, select, input {
    font: inherit;
    color: inherit;
    background: none;
    border: 0;
    border-radius: 0;
    padding: 0;
    margin: 0;
    white-space: nowrap;
}
ul, h1, h2, p {
    margin: 0;
    padding: 0;
    list-style: none;
}
svg {
    width: 16px;
    height: 16px;
    flex: none;
}
.sprite {
    position: absolute;
    width: 0;
    height: 0;
}
.screen {
    display: grid;
    grid-template-columns: 12px minmax(0, 978fr) minmax(0, 562fr);
    height: 100%;
}
.en {
    font-family: "Liberation Mono", "Noto Sans CJK SC", monospace;
    font-size: 10px;
}

/* desktop strip */
.desktop {
    width: 12px;
    height: 100%;
    background: linear-gradient(#2a78dc, #4a90ec 270px, #4e98f0 520px, #fff 526px, #0b2f60 530px, #0d4f80 575px, #3aa0c0 600px, #2a90a8);
    border-right: 3px solid #6a74dc;
    fill: #fff;
    font-size: 9px;
}

/* cad window */
.cad {
    display: flex;
    flex-direction: column;
    min-width: 0;
    background: #ece9d8;
    border-right: 4px solid #5a70d0;
}
.menu {
    display: flex;
    align-items: center;
    gap: 10px;
    height: 20px;
    padding-left: 7px;
    overflow: hidden;
}
.menu .tool {
    gap: 2px;
    padding: 0;
}
.menu .caret {
    margin-right: 0;
}
.row {
    display: flex;
    gap: 4px;
}
.bar {
    display: flex;
    align-items: center;
    height: 24px;
    padding: 0 2px 2px;
    overflow: hidden;
    background: linear-gradient(#fdfcf8, #f4f2e8 60%, #e6e3d0);
    border-radius: 0 3px 3px 0;
}
.wide {
    flex: 1;
    min-width: 0;
}
.account {
    justify-content: flex-end;
    margin-top: 4px;
}
.account .bar {
    height: 22px;
    padding-bottom: 0;
}
.blank {
    width: 23px;
}
.user {
    gap: 2px;
}
.main-tools {
    margin: 4px 0 1px;
}
.main-tools .bar {
    height: 26px;
}
.file-tools {
    width: 149px;
}
.view-tools {
    width: 270px;
}
.tool {
    display: flex;
    align-items: center;
    gap: 3px;
    height: 21px;
    padding: 0 4px;
    flex: none;
}
.view-tools .tool {
    padding: 0 3px;
}
.tool:disabled {
    color: #aca899;
}
.sigma {
    width: 14px;
    font-size: 14px;
}
.white {
    background: #fff;
}
.pressed {
    background: #dfe5f0;
    border: 1px solid #4a68b0;
}
.caret {
    flex: none;
    margin: 0 2px 0 4px;
    border: 3px solid transparent;
    border-top-color: currentColor;
    border-bottom-width: 0;
}
.view-tools .caret, .draw-tools .caret {
    margin-right: 1px;
}
.tight .caret {
    margin: 0 1px 0 0;
}
.sep {
    flex: none;
    width: 1px;
    height: 18px;
    margin-left: 5px;
    background: #c8c4b2;
}
.faint {
    visibility: hidden;
}
.more {
    align-self: flex-start;
    margin-left: auto;
    padding-right: 2px;
    font-size: 14px;
    font-weight: bold;
    line-height: 14px;
}
.grip::before {
    content: "";
    flex: none;
    width: 2px;
    height: 16px;
    margin: 0 1px 0 2px;
    background: repeating-linear-gradient(#c0bcaa 0 2px, transparent 2px 4px);
}

.work {
    display: flex;
    flex: 1;
    min-height: 0;
}
.side {
    display: flex;
    flex-direction: column;
    width: 182px;
    margin-right: 5px;
    flex: none;
}
.side-title {
    display: flex;
    align-items: center;
    height: 17px;
    border: 1px solid #888;
}
.side-title span {
    flex: 1;
}
.side-tab {
    flex: none;
    height: 22px;
    border: 1px solid #aca899;
    border-top-color: #fff;
}
.side-tools {
    display: flex;
    gap: 8px;
    height: 27px;
    padding: 6px;
    background: linear-gradient(#fff, #ece9d8);
}
.side-tools svg {
    display: block;
}
.tree {
    flex: 1;
    min-height: 0;
    margin: 0 0 1px 1px;
    border: 1px solid #7f9db9;
    background: #fff;
    overflow: hidden;
    padding-top: 1px;
}
.tree .en {
    font-size: 11px;
}
.tree > li {
    background: repeating-linear-gradient(#999 0 1px, transparent 1px 2px) 13px 0 / 1px 100% no-repeat;
}
.tree > li:last-child {
    background-size: 1px 8px;
}
.node {
    display: flex;
    align-items: center;
    height: 16px;
    padding-left: 9px;
}
.toggle {
    width: 9px;
    height: 9px;
    flex: none;
    border: 1px solid #7b98b5;
    background: linear-gradient(#000, #000) center / 5px 1px no-repeat, #f4f2ea;
}
.plus {
    background: linear-gradient(#000, #000) center / 5px 1px no-repeat, linear-gradient(#000, #000) center / 1px 5px no-repeat, #f4f2ea;
}
.toggle + svg {
    margin: 0 5px 0 6px;
}
.tree ul {
    margin-left: 33px;
    background: repeating-linear-gradient(#999 0 1px, transparent 1px 2px) 0 0 / 1px calc(100% - 8px) no-repeat;
}
.tree ul li {
    display: flex;
    align-items: center;
    height: 16px;
}
.tree ul li::before {
    content: "";
    width: 10px;
    border-top: 1px dotted #999;
}
.tree ul svg {
    margin-right: 4px;
}
.current {
    display: flex;
    align-items: center;
    background: #ece9d8;
    padding-right: 4px;
}
.cadid {
    margin-left: 5px;
}
.new {
    background: #ffee20;
    font-size: 10px;
    line-height: 10px;
    font-style: italic;
    margin: 0 0 6px 1px;
}
.last {
    height: 16px;
    padding-top: 2px;
    border-bottom: 0;
}

.stage {
    display: flex;
    flex-direction: column;
    gap: 2px;
    flex: 1;
    min-width: 0;
    padding-top: 1px;
}
.stage > .bar, .stage > .row {
    flex: none;
}
.combo {
    position: relative;
    flex: none;
    width: 69px;
    margin-right: 3px;
    background: #fff;
}
.combo.floor {
    width: 59px;
}
.combo select {
    display: block;
    width: 100%;
    height: 19px;
    padding-left: 3px;
    appearance: none;
}
.combo::after {
    content: "";
    position: absolute;
    right: 3px;
    top: 9px;
    border: 3px solid transparent;
    border-top-color: #000;
    border-bottom-width: 0;
}
.combo.empty {
    width: 56px;
    margin: 0;
    background: #f0eee2;
    border: 1px solid #b8b4a2;
}
.empty::after {
    border-top-color: #aca899;
}
.empty select {
    height: 17px;
}
.axis-tools {
    width: 182px;
}
.stub {
    width: 34px;
}
.canvas {
    position: relative;
    flex: 1;
    min-height: 0;
    margin-top: -2px;
    background: #000;
}
.drawing {
    display: block;
    width: 100%;
    height: 100%;
}
.mesh {
    stroke: #fff;
    stroke-opacity: .6;
}
.axis {
    fill: none;
    stroke: #c01414;
    stroke-width: 2;
}
.ring {
    fill: none;
    stroke: #a8a8a8;
    stroke-opacity: .8;
}
.dims {
    fill: #fff;
    font-size: 37px;
}
.axes path {
    fill: none;
    stroke: #0a5a0a;
}
.axes text {
    fill: #a0a0a0;
    font-size: 16px;
    font-weight: bold;
    text-anchor: middle;
}
.ucs {
    font-size: 14px;
    font-weight: 300;
}

/* floating dialog */
.dialog {
    position: absolute;
    left: 2px;
    top: 2px;
    width: 173px;
    height: 172px;
    display: flex;
    flex-direction: column;
    padding: 0 4px 4px 3px;
    background: linear-gradient(#0a6af4, #0458e8 24px, #1448d8);
    border: 1px solid #0838b0;
}
.dialog h2 {
    color: #fff;
    font-size: 12px;
    font-weight: bold;
    line-height: 22px;
}
.checks {
    flex: 1;
    padding: 1px 1px 0 4px;
    background: #fff;
    border: 1px solid #8cb0e8;
}
.checks label {
    display: flex;
    align-items: center;
    gap: 3px;
    height: 12px;
}
.checks span {
    flex: 1;
    line-height: 12px;
}
.checks input {
    appearance: none;
    width: 11px;
    height: 11px;
    border: 1px solid #7c9cbc;
    background: #e8f4e8;
    display: grid;
    place-items: center;
}
.checks input:checked::after {
    content: "";
    width: 3px;
    height: 6px;
    border: solid #209020;
    border-width: 0 2px 2px 0;
    transform: rotate(45deg);
}
.focus span {
    outline: 1px dotted #000;
}

/* browser window */
.browser {
    position: relative;
    display: flex;
    flex-direction: column;
    min-width: 0;
    overflow: hidden;
    background: #f1f1f1;
}
.address {
    display: flex;
    align-items: stretch;
    height: 28px;
    margin-top: 1px;
    flex: none;
    background: #fff;
    border-top: 1px solid #bbb;
    border-bottom: 1px solid #b0b0b0;
}
.address button {
    display: flex;
    align-items: center;
    justify-content: center;
    width: 31px;
    background: #f4f4f4;
    border-right: 1px solid #ccc;
}
.address button:first-child {
    width: 41px;
    padding-left: 10px;
}
.address .drop {
    width: 26px;
    background: #fff;
    border-left: 1px solid #ccc;
}
.url {
    flex: 1;
    min-width: 0;
    display: flex;
    align-items: center;
    gap: 5px;
    padding: 0 6px 0 10px;
}
.url .right {
    margin-left: auto;
}
.url-text {
    font: 13px/20px "Liberation Mono", monospace;
    color: #999;
    white-space: nowrap;
    overflow: hidden;
}
.url-text b {
    color: #000;
    font-weight: normal;
}
.address input {
    width: 106px;
    padding: 0 0 2px 8px;
    font-size: 14px;
}
.address input::placeholder {
    color: #999;
}
.bookmarks {
    display: flex;
    align-items: center;
    height: 37px;
    flex: none;
    padding: 0 0 2px 3px;
    gap: 10px;
    white-space: nowrap;
}
.bookmarks a {
    display: flex;
    align-items: center;
    gap: 1px;
    margin-right: 3px;
    color: #333;
    text-decoration: none;
}
.bookmarks a:first-child {
    margin: 0 -2px 0 0;
}
.chev {
    color: #888;
    font-size: 22px;
    margin: 0 0 4px -8px;
}
.plugins {
    display: flex;
    align-items: center;
    gap: 5px;
    margin-left: auto;
    padding: 0 5px 0 10px;
    border-left: 2px dotted #bbb;
}
.plugins .caret {
    margin: 0 3px 0 4px;
    border-width: 4px 4px 0;
    border-top-color: #666;
}
.tabs {
    display: flex;
    height: 28px;
    flex: none;
    border-bottom: 1px solid #aaa;
}
.tab {
    display: flex;
    align-items: center;
    width: 178px;
    padding: 0 4px 0 0;
    border: 1px solid #c4c4c4;
    border-left: 0;
    border-radius: 0 4px 0 0;
    color: #333;
}
.tab svg {
    color: #888;
}
.tab span {
    flex: 1;
    overflow: hidden;
    text-align: left;
}
.active {
    width: 224px;
    height: 28px;
    margin-left: 1px;
    padding: 0 3px 0 5px;
    gap: 3px;
    color: #000;
    background: #fff;
    border: 1px solid #aaa;
    border-bottom: 0;
    border-radius: 4px 4px 0 0;
}
.active span {
    mask-image: linear-gradient(90deg, #000 85%, transparent);
}
.add {
    width: 25px;
    border-right: 1px solid #ccc;
    font-size: 20px;
    color: #555;
}
.restore {
    margin: 5px 12px 0 auto;
}
.page {
    flex: 1;
    min-height: 0;
    display: flex;
    flex-direction: column;
    background: #fff;
    padding-top: 48px;
}
.page h1 {
    flex: none;
    padding: 22px 9px 21px;
    font-size: 18px;
    line-height: 20px;
    font-weight: 300;
    color: #111;
    background: #f8f8f8;
    border: solid #e2e2e2;
    border-width: 1px 0;
    white-space: nowrap;
    height: 64px;
}
.stats {
    flex: none;
    height: 57px;
    padding: 21px 0 0;
    font-family: "Open Sans", "Noto Sans CJK SC", sans-serif;
    font-size: 14px;
    line-height: 18px;
    color: #1c62a8;
    white-space: nowrap;
    text-indent: -4px;
}
.plan {
    width: 100%;
    height: auto;
    flex: 1;
    min-height: 0;
}
.plan path[stroke] {
    fill: none;
}
.notes, .len {
    font-weight: 300;
}
.l {
    font-size: 17px;
}
.m {
    font-size: 15px;
}
.s {
    font-size: 13px;
}
.len {
    font-size: 21px;
    fill: #fff;
}
.hall {
    font-size: 23px;
    font-weight: 300;
    fill: #fff;
}
.float {
    position: absolute;
    right: -7px;
    top: 494px;
    display: flex;
    flex-direction: column;
    gap: 10px;
}
.float button {
    width: 40px;
    height: 40px;
    padding: 0 0 2px 6px;
    background: #ff6a00;
    color: #fff;
    font-size: 14px;
    line-height: 18px;
    text-align: left;
}
.float .top {
    background: #bbb;
}
.top svg {
    display: block;
    width: 24px;
    height: 24px;
}
.marks {
    position: absolute;
    left: 0;
    top: 0;
    width: 100%;
    height: 100%;
    pointer-events: none;
    fill: none;
    stroke: #f00;
    stroke-width: 3;
}
.marks marker path {
    stroke: none;
}
```
